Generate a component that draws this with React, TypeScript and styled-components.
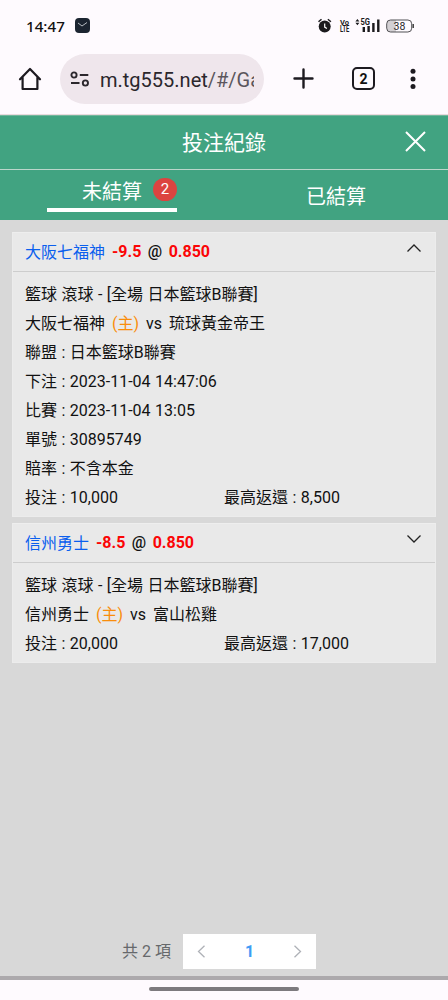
import React from "react";
import styled, { createGlobalStyle } from "styled-components";

const GlobalStyle = createGlobalStyle`
  * { box-sizing: border-box; }
  body {
    margin: 0;
    background: #fefafe;
    font-family: Roboto, "Noto Sans CJK TC", sans-serif;
    font-size: 16px;
    color: #111;
  }
`;

const Screen = styled.div`
  display: flex;
  flex-direction: column;
  height: 1000px;
  width: 448px;
  overflow: hidden;
`;

const StatusBar = styled.div`
  display: flex;
  align-items: center;
  height: 54px;
  padding: 0 34px 3px 26px;
`;

const Clock = styled.span`
  width: 49px;
  font: 500 15.2px "Noto Sans", sans-serif;
  color: #111;
`;

const StatusIcons = styled.svg`
  display: block;
  margin-left: auto;
`;

const BrowserBar = styled.div`
  display: flex;
  align-items: center;
  height: 61px;
  padding: 0 27px 11px 18px;
  border-bottom: 1px solid #e9dade;
`;

const UrlPill = styled.div`
  display: flex;
  align-items: center;
  width: 204px;
  height: 50px;
  margin-left: 18px;
  padding: 0 10px;
  border-radius: 25px;
  background: #efe6ec;
`;

const Url = styled.div`
  flex: 1;
  margin-left: 10px;
  padding-top: 2px;
  overflow: hidden;
  white-space: nowrap;
  font-size: 20px;
  line-height: 26px;
  color: #2b272c;
  span { color: #5b565d; }
`;

const BrowserActions = styled.div`
  display: flex;
  flex: 1;
  align-items: center;
  justify-content: space-between;
  padding-left: 29px;
`;

const TabCount = styled.div`
  width: 23px;
  height: 23px;
  margin-left: 8px;
  border: 2px solid #1d1a20;
  border-radius: 5px;
  text-align: center;
  font-size: 14px;
  font-weight: 700;
  line-height: 20px;
`;

const TitleBar = styled.header`
  display: grid;
  grid-template-columns: 1fr auto 1fr;
  align-items: center;
  height: 55px;
  padding: 0 22px;
  border-top: 1px solid #73b69c;
  border-bottom: 1px solid #bbd6cb;
  background: #41a381;
  color: #fff;
  h1 {
    grid-column: 2;
    margin: 0;
    font-size: 21px;
    font-weight: 400;
    line-height: 28px;
  }
  svg { justify-self: end; margin-bottom: 2px; }
`;

const Tabs = styled.nav`
  display: grid;
  grid-template-columns: 1fr 1fr;
  justify-items: center;
  height: 50px;
  background: #41a381;
  color: #fff;
  font-size: 20px;
`;

const Tab = styled.div<{ $active?: boolean }>`
  display: flex;
  width: 130px;
  height: ${(p) => (p.$active ? "42px" : "50px")};
  padding-left: ${(p) => (p.$active ? "35px" : "0")};
  justify-content: ${(p) => (p.$active ? "flex-start" : "center")};
  align-items: center;
  border-bottom: ${(p) => (p.$active ? "4px solid #fff" : "0")};
  line-height: 30px;
  span { padding-top: ${(p) => (p.$active ? "5px" : "3px")}; }
`;

const Badge = styled.b`
  width: 24px;
  height: 23px;
  margin-left: 11px;
  border-radius: 12px;
  background: #dc4440;
  text-align: center;
  font-size: 15px;
  font-weight: 400;
  line-height: 23px;
`;

const Content = styled.main`
  display: flex;
  flex-direction: column;
  gap: 6px;
  height: 756px;
  padding: 12px 12px 7px;
  background: #d8d8d8;
`;

const Card = styled.section`
  background: #e9e9e9;
  border: 1px solid #ececec;
  border-top-color: #eee;
`;

const CardHeader = styled.div`
  display: flex;
  align-items: center;
  height: 39px;
  padding: 0 14px 2px 12px;
  border-bottom: 1px solid #cdcdcd;
  word-spacing: 2.5px;
  svg { margin: 0 0 7px auto; }
`;

const Team = styled.span`
  margin-right: 7px;
  color: #0b5fee;
`;

const Odds = styled.span`
  font-weight: 500;
  b { color: #fb0505; font-weight: 700; }
`;

const CardBody = styled.div`
  padding: 8px 12px 4px;
  line-height: 29px;
  word-spacing: 0.5px;
`;

const Line = styled.div`
  display: flex;
  height: 29px;
  white-space: pre;
`;

const Home = styled.span`
  margin: 0 7px;
  color: #f98d0b;
`;

const Versus = styled.span`
  margin-right: 7px;
`;

const Stake = styled.span`
  width: 199px;
`;

const Pagination = styled.footer`
  display: flex;
  align-items: center;
  justify-content: center;
  gap: 12px;
  margin-top: auto;
  padding-right: 10px;
  color: #66686b;
  > span { padding-bottom: 3px; }
`;

const Pager = styled.div`
  display: flex;
  align-items: center;
  justify-content: space-between;
  width: 133px;
  height: 35px;
  padding: 0 14px;
  background: #fff;
  color: #3f9cf5;
  font-weight: 700;
`;

const BottomEdge = styled.div`
  height: 4px;
  background: #aca9ac;
`;

const GestureArea = styled.div`
  display: flex;
  justify-content: center;
  align-items: center;
  flex: 1;
  &::after {
    content: "";
    width: 150px;
    height: 4px;
    border-radius: 2px;
    background: #7d7a7e;
    margin-bottom: 2px;
  }
`;

function Chevron({ d, w = 14, h = 8, color = "#222" }: { d: string; w?: number; h?: number; color?: string }) {
  return (
    <svg width={w} height={h} viewBox={`0 0 ${w} ${h}`} fill="none" stroke={color} strokeWidth="1.3">
      <path d={d} />
    </svg>
  );
}

interface Bet {
  team: string;
  line: string;
  odds: string;
  rival: string;
  details: string[];
  stake: string;
  payout: string;
  open: boolean;
}

const bets: Bet[] = [
  {
    team: "大阪七福神",
    line: "-9.5",
    odds: "0.850",
    rival: "琉球黃金帝王",
    details: [
      "聯盟 : 日本籃球B聯賽",
      "下注 : 2023-11-04 14:47:06",
      "比賽 : 2023-11-04 13:05",
      "單號 : 30895749",
      "賠率 : 不含本金",
    ],
    stake: "10,000",
    payout: "8,500",
    open: true,
  },
  {
    team: "信州勇士",
    line: "-8.5",
    odds: "0.850",
    rival: "富山松雞",
    details: [],
    stake: "20,000",
    payout: "17,000",
    open: false,
  },
];

function BetCard({ bet }: { bet: Bet }) {
  return (
    <Card>
      <CardHeader>
        <Team>{bet.team}</Team>
        <Odds>
          <b>{bet.line}</b> @ <b>{bet.odds}</b>
        </Odds>
        <Chevron d={bet.open ? "M.5 7.5 7 1l6.5 6.5" : "M.5.5 7 7 13.5.5"} />
      </CardHeader>
      <CardBody>
        <Line>籃球 滾球 - [全場 日本籃球B聯賽]</Line>
        <Line>
          {bet.team}
          <Home>(主)</Home>
          <Versus>vs</Versus>
          {bet.rival}
        </Line>
        {bet.details.map((text) => (
          <Line key={text}>{text}</Line>
        ))}
        <Line>
          <Stake>投注 : {bet.stake}</Stake>
          <span>最高返還 : {bet.payout}</span>
        </Line>
      </CardBody>
    </Card>
  );
}

export default function App() {
  return (
    <Screen>
      <GlobalStyle />
      <StatusBar>
        <Clock>14:47</Clock>
        <svg width="15" height="15" viewBox="0 0 15 15">
          <rect width="15" height="15" rx="4" fill="#1b2430" />
          <path d="m3 5 4 3 5-3.5" fill="none" stroke="#b5bac0" strokeWidth="1" />
        </svg>
        <StatusIcons width="97" height="18" viewBox="317 17 97 18">
          <circle cx="324.7" cy="26.6" r="6" fill="#1b1a1d" />
          <path d="m318.5 21.8 3-2.6m6.4 0 3 2.6" stroke="#1b1a1d" strokeWidth="1.5" />
          <path d="M324.7 23.6v3.5l2.2 1.5" stroke="#fff" strokeWidth="1.2" fill="none" />
          <g fill="#1b1a1d" fontFamily="Roboto, sans-serif" fontWeight="700">
            <text x="340" y="25" fontSize="8" textLength="9" lengthAdjust="spacingAndGlyphs">Vo</text>
            <text x="340" y="31.8" fontSize="8.4" textLength="9.4" lengthAdjust="spacingAndGlyphs">LTE</text>
            <text x="360.5" y="24.8" fontSize="8.2" textLength="9.5" lengthAdjust="spacingAndGlyphs">5G</text>
          </g>
          <path d="m355.4 21.4 2-2.4 2 2.4zm0 1.4 2 2.4 2-2.4z" fill="#1b1a1d" />
          <path d="M363.8 32v-5M368.6 32v-6M373.4 32v-9M378.3 32V19.5" stroke="#1b1a1d" strokeWidth="2.4" />
          <path d="M390 20h6v12h-6q-3 0-3-3v-6q0-3 3-3" fill="#d3d0d4" />
          <rect x="386.7" y="20" width="25" height="12" rx="3.8" fill="none" stroke="#515054" />
          <path d="M413.2 24v4" stroke="#333" strokeWidth="1.4" />
          <text x="399.4" y="29.8" textAnchor="middle" fontSize="10.5" fill="#29282b" fontFamily="Roboto, sans-serif">38</text>
        </StatusIcons>
      </StatusBar>
      <BrowserBar>
        <svg width="24" height="24" viewBox="0 0 24 24" fill="none" stroke="#1d1a20" strokeWidth="2.2" strokeLinejoin="round" strokeLinecap="round">
          <path d="M2 12.3 12 2l10 10.3M4.6 10v12h14.8V10" />
        </svg>
        <UrlPill>
          <svg width="20" height="16" viewBox="0 0 20 16" fill="none" stroke="#2b272c" strokeWidth="1.9">
            <circle cx="4" cy="4" r="2.6" />
            <circle cx="15.4" cy="12" r="2.6" />
            <path d="M9.8 4H18.3M1 12h8.5" />
          </svg>
          <Url>
            m.tg555.net<span>/#/Game</span>
          </Url>
        </UrlPill>
        <BrowserActions>
          <svg width="21" height="21" viewBox="0 0 21 21" stroke="#1d1a20" strokeWidth="2.4" strokeLinecap="round">
            <path d="M10.5 1.5v18M1.5 10.5h18" />
          </svg>
          <TabCount>2</TabCount>
          <svg width="16" height="22" viewBox="0 0 16 22" fill="#1d1a20">
            <circle cx="8" cy="3.3" r="2.5" />
            <circle cx="8" cy="11" r="2.5" />
            <circle cx="8" cy="18.5" r="2.5" />
          </svg>
        </BrowserActions>
      </BrowserBar>
      <TitleBar>
        <h1>投注紀錄</h1>
        <svg width="21" height="21" viewBox="0 0 21 21" stroke="#fff" strokeWidth="2">
          <path d="m1 1 19 19M20 1 1 20" />
        </svg>
      </TitleBar>
      <Tabs>
        <Tab $active>
          <span>未結算</span>
          <Badge>2</Badge>
        </Tab>
        <Tab>
          <span>已結算</span>
        </Tab>
      </Tabs>
      <Content>
        {bets.map((bet) => (
          <BetCard key={bet.team} bet={bet} />
        ))}
        <Pagination>
          <span>共 2 項</span>
          <Pager>
            <Chevron d="M7.5.8 1.5 6.5l6 5.7" w={9} h={13} color="#aeb1b7" />
            1
            <Chevron d="m1.5.8 6 5.7-6 5.7" w={9} h={13} color="#aeb1b7" />
          </Pager>
        </Pagination>
      </Content>
      <BottomEdge />
      <GestureArea />
    </Screen>
  );
}
